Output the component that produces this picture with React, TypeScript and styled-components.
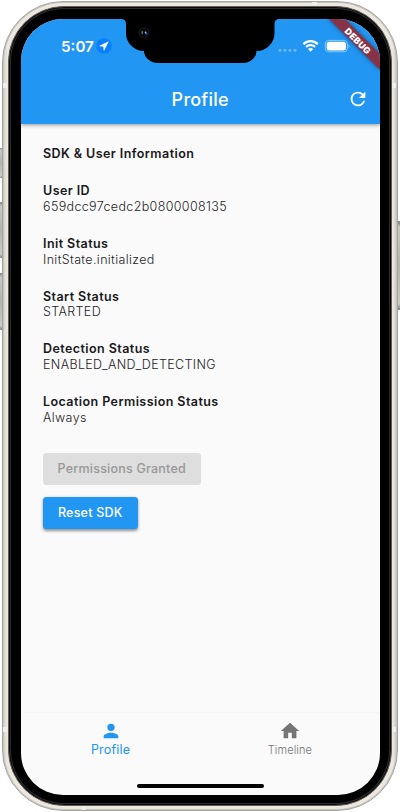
import React from 'react';
import styled, { createGlobalStyle } from 'styled-components';

const GlobalStyle = createGlobalStyle`
  html, body { margin: 0; background: #fff; }
  body { font-family: Inter, "Liberation Sans", sans-serif; overflow: hidden; }
  * { box-sizing: border-box; }
`;

const Stage = styled.main`
  position: relative;
  width: 400px;
  height: 812px;
  padding: 1px 2.5px 1px 2px;
  overflow: hidden;
`;

const SideButton = styled.i<{ $top: number; $height: number; $right?: boolean }>`
  position: absolute;
  top: ${p => p.$top}px;
  ${p => (p.$right ? 'right: 0; width: 4px;' : 'left: 0; width: 3px;')}
  height: ${p => p.$height}px;
  border-radius: 1px;
  background: linear-gradient(#777674, #c9c7c4 7%, #b5b3b0 50%, #cccac7 93%, #777674);
`;

const Antenna = styled.i<{ $x: number; $y: number; $flat?: boolean }>`
  position: absolute;
  left: ${p => p.$x}px;
  top: ${p => p.$y}px;
  width: ${p => (p.$flat ? 5 : 4)}px;
  height: ${p => (p.$flat ? 3 : 5)}px;
  background: #f0efea;
`;

const Chassis = styled.div`
  position: relative;
  height: 810px;
  padding: 3.5px 4.5px 4.5px;
  border: 1px solid #a5a5a2;
  border-radius: 61px;
  background: linear-gradient(90deg, #d2cfc8, #ece8df 4px, #ece8df calc(100% - 4px), #c7c4be);
  box-shadow: inset 0 0 0 1px #c4c2bd;
`;

const Bezel = styled.div`
  height: 100%;
  padding: 12.5px 12px 9px 12.5px;
  border: 1px solid #625f5a;
  border-radius: 56px;
  background: #000;
  box-shadow: inset 0 0 0 1px #090909, inset 0 0 0 2px #2b2d2e;
`;

const Screen = styled.div`
  position: relative;
  display: flex;
  flex-direction: column;
  width: 358.5px;
  height: 776px;
  overflow: hidden;
  border-radius: 42px;
  background: #fafafa;
`;

const Header = styled.header`
  position: relative;
  z-index: 1;
  flex: 0 0 105px;
  color: #fff;
  background: #2196f3;
  box-shadow: 0 1px 4px rgba(0, 0, 0, .42);
`;

const StatusBar = styled.div`
  display: flex;
  justify-content: space-between;
  height: 55px;
  padding: 0 28.5px 0 40px;
`;

const Clock = styled.div`
  display: flex;
  align-items: center;
  gap: 2px;
  height: 54px;
  font-size: 15.2px;
  font-weight: 600;
`;

const Signals = styled.div`
  display: flex;
  height: 54px;
  align-items: center;
`;

const Notch = styled.svg`
  position: absolute;
  left: 100px;
  top: 0;
`;

const Ribbon = styled.svg`
  position: absolute;
  right: 0;
  top: 0;
`;

const TitleBar = styled.div`
  display: grid;
  grid-template-columns: 40px 1fr 40px;
  align-items: center;
  justify-items: center;
  height: 50px;
`;

const Title = styled.h1`
  margin: 0;
  font-size: 18px;
  font-weight: 450;
  letter-spacing: .25px;
`;

const RefreshButton = styled.button`
  display: flex;
  margin: 0 4px 0 0;
  padding: 0;
  border: 0;
  color: #fff;
  background: none;
`;

const Content = styled.section`
  display: flex;
  flex: 1;
  flex-direction: column;
  align-items: flex-start;
  gap: 21.4px;
  padding: 22px 22px 0;
  color: #18181a;
  font-size: 12.5px;
  line-height: 15.7px;
`;

const Label = styled.div`
  font-weight: 600;
  letter-spacing: .43px;
`;

const Value = styled.div`
  color: #242424;
  font-weight: 300;
  letter-spacing: .36px;
`;

const Actions = styled.div`
  display: flex;
  flex-direction: column;
  align-items: flex-start;
  gap: 11.5px;
  padding-top: 5.7px;
`;

const Action = styled.button<{ $primary?: boolean; $width: number }>`
  width: ${p => p.$width}px;
  height: 32.3px;
  padding: 0;
  border: 0;
  border-radius: 3.5px;
  color: ${p => (p.$primary ? '#fff' : '#979797')};
  background: ${p => (p.$primary ? '#2196f3' : '#dedede')};
  box-shadow: ${p => (p.$primary ? '0 1.5px 3px rgba(0,0,0,.42)' : 'none')};
  font: 500 12.5px/32px Inter, sans-serif;
  letter-spacing: .22px;
`;

const Navigation = styled.nav`
  display: grid;
  grid-template-columns: 1fr 1fr;
  flex: 0 0 83px;
  border-top: 1px solid #f5f5f5;
`;

const Tab = styled.div<{ $active?: boolean }>`
  display: flex;
  flex-direction: column;
  align-items: center;
  padding-top: 7px;
  color: ${p => (p.$active ? '#2196f3' : '#757575')};
  font-size: ${p => (p.$active ? 12.5 : 11)}px;
  font-weight: ${p => (p.$active ? 400 : 350)};
  line-height: ${p => (p.$active ? 15.5 : 17)}px;
  letter-spacing: ${p => (p.$active ? .2 : .1)}px;
`;

const HomeIndicator = styled.i`
  position: absolute;
  bottom: 7px;
  left: 116px;
  width: 127px;
  height: 4.5px;
  border-radius: 3px;
  background: #000;
`;

const entries = [
  ['User ID', '659dcc97cedc2b0800008135'],
  ['Init Status', 'InitState.initialized'],
  ['Start Status', 'STARTED'],
  ['Detection Status', 'ENABLED_AND_DETECTING'],
  ['Location Permission Status', 'Always'],
];

export default function App() {
  return (
    <>
      <GlobalStyle />
      <Stage>
        <SideButton $top={148} $height={30} />
        <SideButton $top={202} $height={56} />
        <SideButton $top={273} $height={57} />
        <SideButton $top={221} $height={89} $right />
        <Chassis>
          <Bezel>
            <Screen>
              <Header>
                <StatusBar>
                  <Clock>
                    5:07
                    <svg width="16" height="16" viewBox="0 0 16 16">
                      <circle cx="8" cy="8" r="7.7" fill="#087fff" />
                      <path d="M12.3 3.7 3.6 8l4 .4.4 4Z" fill="#fff" stroke="#fff" strokeWidth=".5" strokeLinejoin="round" />
                    </svg>
                  </Clock>
                  <Signals>
                    <svg width="73" height="18" viewBox="0 0 73 18">
                      <g fill="#6bb8f7">
                        <circle cx="2" cy="13.3" r="1.5" /><circle cx="7" cy="13.3" r="1.5" />
                        <circle cx="12" cy="13.3" r="1.5" /><circle cx="17" cy="13.3" r="1.5" />
                      </g>
                      <g fill="none" stroke="#fff" strokeWidth="2.2">
                        <path d="M25.4 7.1a10.4 10.4 0 0 1 14.4 0M28.1 9.9a6.6 6.6 0 0 1 9 0" />
                      </g>
                      <path d="M30 12a4 4 0 0 1 5.2 0l-2.6 2.7Z" fill="#fff" />
                      <rect x="47.2" y="3.4" width="22.2" height="11.4" rx="3.7" fill="none" stroke="#8bc8f8" />
                      <rect x="48.7" y="4.8" width="19.2" height="8.7" rx="2.5" fill="#fff" />
                      <path d="M70.6 7.4q2 1.8 0 3.7Z" fill="#8bc8f8" />
                    </svg>
                  </Signals>
                </StatusBar>
                <Notch width="159" height="45" viewBox="0 0 159 45">
                  <path d="M0-1V0Q5 0 5 5V14A18 18 0 0 0 23 32A14.5 12 0 0 0 37.5 44H121.5A14 12 0 0 0 135.5 32A18 18 0 0 0 153.5 14V5Q153.5 0 158.5 0V-1Z" />
                  <circle cx="23" cy="13.8" r="5.8" fill="#111" />
                  <circle cx="23" cy="13.8" r="4" fill="#05070c" />
                  <ellipse cx="21.2" cy="13.5" rx=".8" ry="1.9" fill="#4b7772" />
                  <circle cx="25.2" cy="14.5" r="1.3" fill="#2455b3" />
                  <circle cx="24.5" cy="13.3" r=".8" fill="#bacbdc" />
                </Notch>
                <TitleBar>
                  <span />
                  <Title>Profile</Title>
                  <RefreshButton aria-label="Refresh">
                    <svg width="22" height="22" viewBox="0 0 24 24" fill="currentColor">
                      <path d="M17.65 6.35A7.958 7.958 0 0 0 12 4a8 8 0 1 0 7.73 10h-2.08A6 6 0 1 1 12 6c1.66 0 3.14.69 4.22 1.78L13 11h7V4z" />
                    </svg>
                  </RefreshButton>
                </TitleBar>
                <Ribbon width="54" height="54" viewBox="0 0 54 54">
                  <defs>
                    <filter id="ribbonShade" x="-20%" y="-20%" width="140%" height="140%">
                      <feDropShadow dx="0" dy="0" stdDeviation="2" floodOpacity=".5" />
                    </filter>
                  </defs>
                  <path d="M2-1 54 51V35L18-1Z" fill="#873047" filter="url(#ribbonShade)" />
                  <text x="32" y="25.5" transform="rotate(45 32 22)" textAnchor="middle" fill="#fff" fontFamily="Inter" fontSize="9" fontWeight="900" letterSpacing=".3">DEBUG</text>
                </Ribbon>
              </Header>
              <Content>
                <Label>SDK &amp; User Information</Label>
                {entries.map(([label, value]) => (
                  <div key={label}>
                    <Label>{label}</Label>
                    <Value>{value}</Value>
                  </div>
                ))}
                <Actions>
                  <Action $width={157.5} disabled>Permissions Granted</Action>
                  <Action $width={94.5} $primary>Reset SDK</Action>
                </Actions>
              </Content>
              <Navigation>
                <Tab $active>
                  <svg width="22" height="22" viewBox="0 0 24 24" fill="currentColor">
                    <path d="M12 12a4 4 0 1 0 0-8 4 4 0 0 0 0 8zm0 2c-2.67 0-8 1.34-8 4v2h16v-2c0-2.66-5.33-4-8-4z" />
                  </svg>
                  Profile
                </Tab>
                <Tab>
                  <svg width="22" height="22" viewBox="0 0 24 24" fill="currentColor">
                    <path d="M10 20v-6h4v6h5v-8h3L12 3 2 12h3v8z" />
                  </svg>
                  Timeline
                </Tab>
              </Navigation>
              <HomeIndicator />
            </Screen>
          </Bezel>
        </Chassis>
        <Antenna $x={3} $y={83} />
        <Antenna $x={392} $y={83} />
        <Antenna $x={3} $y={727} />
        <Antenna $x={392} $y={727} />
        <Antenna $x={312} $y={2} $flat />
        <Antenna $x={81} $y={807} $flat />
      </Stage>
    </>
  );
}
